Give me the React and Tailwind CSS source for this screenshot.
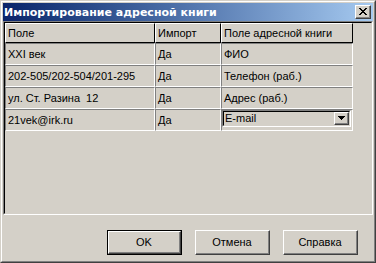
import React from "react";

const xPix = [
  "XX....XX",
  ".XX..XX.",
  "..XXXX..",
  "...XX...",
  "..XXXX..",
  ".XX..XX.",
  "XX....XX",
];

function PixIcon({ rows, className }) {
  const w = rows[0].length;
  const h = rows.length;
  const rects = [];
  rows.forEach((r, y) =>
    r.split("").forEach((c, x) => {
      if (c === "X") rects.push(<rect key={x + "-" + y} x={x} y={y} width="1" height="1" fill="#000" />);
    })
  );
  return (
    <svg width={w} height={h} viewBox={`0 0 ${w} ${h}`} shapeRendering="crispEdges" className={className}>
      {rects}
    </svg>
  );
}

const arrowPix = ["XXXXXXX", ".XXXXX.", "..XXX..", "...X..."];

function HeaderCell({ w, children }) {
  return (
    <div
      className={`${w} h-full border-t border-l border-t-white border-l-white border-b border-r border-b-black border-r-black flex items-center pl-[2px] whitespace-pre overflow-hidden`}
    >
      {children}
    </div>
  );
}

function Cell({ w, children }) {
  return (
    <div
      className={`${w} h-full border-t border-l border-t-[#808080] border-l-[#808080] border-b border-r border-b-white border-r-white flex items-center pl-[2px] whitespace-pre overflow-hidden`}
    >
      {children}
    </div>
  );
}

function Btn({ children, def }) {
  const inner = (
    <div className="w-full h-full border-t border-l border-t-white border-l-white border-b border-r border-b-[#404040] border-r-[#404040]">
      <div className="w-full h-full border-b border-r border-b-[#808080] border-r-[#808080] flex items-center justify-center">
        {children}
      </div>
    </div>
  );
  return (
    <div className={`w-[75px] h-[25px] ${def ? "border border-black" : ""}`}>{inner}</div>
  );
}

const rows = [
  ["XXI век", "Да", "ФИО"],
  ["202-505/202-504/201-295", "Да", "Телефон (раб.)"],
  ["ул. Ст. Разина  12", "Да", "Адрес (раб.)"],
];

export default function App() {
  return (
    <div className="w-[376px] h-[263px] bg-[#d4d0c8] text-black text-[11px] leading-none font-['Liberation_Sans',Arial,sans-serif] overflow-hidden">
      <div className="w-full h-full border border-t-[#d4d0c8] border-l-[#d4d0c8] border-r-[#404040] border-b-[#404040]">
        <div className="w-full h-full border border-t-white border-l-white border-r-[#808080] border-b-[#808080] p-px flex flex-col">
          {/* title bar */}
          <div className="h-[18px] shrink-0 bg-gradient-to-r from-[#0a246a] to-[#a6caf0] flex items-center pl-[1px] pr-[2px]">
            <span className="text-white font-bold text-[11px] whitespace-pre font-['DejaVu_Sans',sans-serif]">Импортирование адресной книги</span>
            <div className="ml-auto w-[16px] h-[14px] bg-[#d4d0c8] border-t border-l border-t-white border-l-white border-b border-r border-b-[#404040] border-r-[#404040]">
              <div className="w-full h-full border-b border-r border-b-[#808080] border-r-[#808080] flex items-center justify-center pl-px">
                <PixIcon rows={xPix} />
              </div>
            </div>
          </div>
          {/* grid */}
          <div className="h-[194px] shrink-0 border border-t-[#808080] border-l-[#808080] border-b-white border-r-white">
            <div className="w-full h-full border border-t-black border-l-black border-b-[#d4d0c8] border-r-[#d4d0c8] flex flex-col">
              <div className="h-[20px] flex">
                <HeaderCell w="w-[150px]">Поле</HeaderCell>
                <HeaderCell w="w-[66px]">Импорт</HeaderCell>
                <HeaderCell w="w-[132px]">Поле адресной книги</HeaderCell>
              </div>
              {rows.map((r, i) => (
                <div key={i} className="h-[22px] flex">
                  <Cell w="w-[150px]">{r[0]}</Cell>
                  <Cell w="w-[66px]">{r[1]}</Cell>
                  <Cell w="w-[132px]">{r[2]}</Cell>
                </div>
              ))}
              <div className="h-[22px] flex">
                <Cell w="w-[150px]">21vek@irk.ru</Cell>
                <Cell w="w-[66px]">Да</Cell>
                <div className="w-[132px] h-full border-t border-l border-t-[#808080] border-l-[#808080] border-b border-r border-b-white border-r-white pr-px pb-[3px]">
                  <div className="w-full h-full border border-t-[#808080] border-l-[#808080] border-b-white border-r-white">
                    <div className="w-full h-full border border-t-black border-l-black border-b-[#d4d0c8] border-r-[#d4d0c8] bg-[#d4d0c8] flex items-center">
                      <span className="pl-px">E-mail</span>
                      <div className="ml-auto w-[15px] h-full bg-[#d4d0c8] border-t border-l border-t-white border-l-white border-b border-r border-b-[#404040] border-r-[#404040]">
                        <div className="w-full h-full border-b border-r border-b-[#808080] border-r-[#808080] flex items-center justify-center">
                          <PixIcon rows={arrowPix} />
                        </div>
                      </div>
                    </div>
                  </div>
                </div>
              </div>
            </div>
          </div>
          {/* buttons */}
          <div className="flex-1 flex items-start justify-end pt-[15px] pr-[15px] gap-[13px]">
            <Btn def>OK</Btn>
            <Btn>Отмена</Btn>
            <Btn>Справка</Btn>
          </div>
        </div>
      </div>
    </div>
  );
}
